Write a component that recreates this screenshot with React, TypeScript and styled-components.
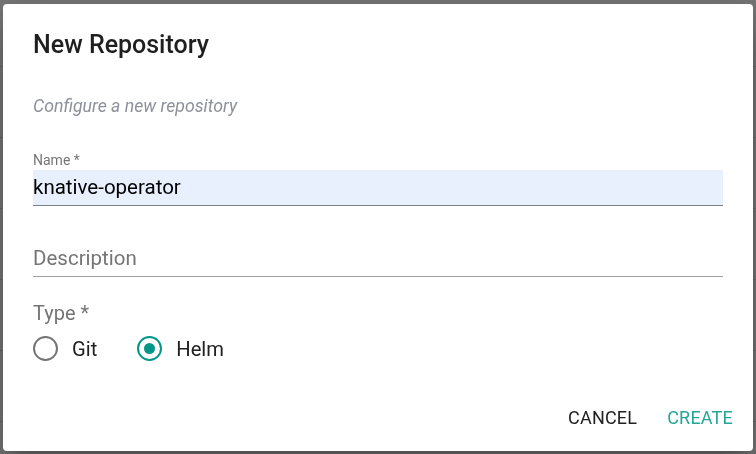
import React, { useState } from "react";
import styled, { createGlobalStyle } from "styled-components";

const GlobalStyle = createGlobalStyle`
  html, body {
    margin: 0;
    padding: 0;
    background: #ffffff;
    font-family: Roboto, "Liberation Sans", Arial, sans-serif;
  }
  * {
    box-sizing: border-box;
  }
`;

// page behind the dialog, only visible through the backdrop
const Page = styled.div`
  display: flex;
  flex-direction: column;
  width: 756px;
  height: 454px;
  overflow: hidden;
`;

const PageHeader = styled.div`
  height: 67px;
  flex-shrink: 0;
  border-bottom: 1px solid #e0e0e0;
`;

const PageRow = styled.div`
  height: 71px;
  flex-shrink: 0;
  border-bottom: 1px solid #e0e0e0;
`;

const Backdrop = styled.div`
  position: fixed;
  inset: 0;
  display: flex;
  align-items: center;
  justify-content: center;
  background-color: rgba(0, 0, 0, 0.54);
`;

const Dialog = styled.div`
  display: flex;
  flex-direction: column;
  width: 750px;
  height: 447px;
  padding: 25px 30px 15px 30px;
  background-color: #ffffff;
  border-radius: 4px;
  box-shadow: 0 11px 15px -7px rgba(0, 0, 0, 0.2),
    0 24px 38px 3px rgba(0, 0, 0, 0.14), 0 9px 46px 8px rgba(0, 0, 0, 0.12);
`;

const Title = styled.h2`
  margin: 0;
  font-size: 25px;
  line-height: 32px;
  font-weight: 500;
  color: #1f1f1f;
`;

const Subtitle = styled.p`
  margin: 33px 0 0 0;
  font-size: 17.7px;
  line-height: 24px;
  font-style: italic;
  color: #8d9199;
`;

const Field = styled.div<{ $top: number }>`
  display: flex;
  flex-direction: column;
  margin-top: ${(p) => p.$top}px;
`;

const SmallLabel = styled.label`
  height: 16px;
  margin-bottom: 2px;
  font-size: 14px;
  line-height: 16px;
  color: #757575;
`;

const TextInput = styled.input<{ $filled?: boolean }>`
  width: 100%;
  height: 36px;
  margin: 0;
  padding: 0;
  border: none;
  border-bottom: 1px solid ${(p) => (p.$filled ? "#7b7f86" : "#9e9e9e")};
  border-radius: 0;
  outline: none;
  background-color: ${(p) => (p.$filled ? "#e8f0fe" : "transparent")};
  font-family: Roboto, "Liberation Sans", Arial, sans-serif;
  font-size: 20.5px;
  color: #000000;

  &::placeholder {
    color: #757575;
    opacity: 1;
  }
`;

const GroupLabel = styled.div`
  margin-top: 24px;
  font-size: 20px;
  line-height: 24px;
  color: #757575;
`;

const RadioRow = styled.div`
  display: flex;
  align-items: center;
  gap: 40px;
  margin-top: 8px;
  height: 32px;
`;

const RadioOption = styled.label`
  display: flex;
  align-items: center;
  gap: 14px;
  font-size: 20.2px;
  line-height: 32px;
  color: #212121;
  cursor: pointer;
`;

const RadioCircle = styled.span<{ $checked: boolean }>`
  display: flex;
  align-items: center;
  justify-content: center;
  width: 25px;
  height: 25px;
  border-radius: 50%;
  border: 2.5px solid ${(p) => (p.$checked ? "#009688" : "#757575")};

  &::after {
    content: "";
    width: 11px;
    height: 11px;
    border-radius: 50%;
    background-color: #009688;
    display: ${(p) => (p.$checked ? "block" : "none")};
  }
`;

const Actions = styled.div`
  display: flex;
  justify-content: flex-end;
  gap: 14px;
  margin-top: auto;
  margin-right: -18px;
`;

const ActionButton = styled.button<{ $primary?: boolean }>`
  height: 36px;
  padding: 0 8px;
  border: none;
  background: none;
  font-family: Roboto, "Liberation Sans", Arial, sans-serif;
  font-size: 18px;
  letter-spacing: 0.2px;
  text-transform: uppercase;
  color: ${(p) => (p.$primary ? "#26a69a" : "#212121")};
  cursor: pointer;
`;

const App = () => {
  const [name, setName] = useState("knative-operator");
  const [description, setDescription] = useState("");
  const [type, setType] = useState("helm");

  const types = [
    { value: "git", label: "Git" },
    { value: "helm", label: "Helm" },
  ];

  return (
    <>
      <GlobalStyle />
      <Page>
        <PageHeader />
        {[0, 1, 2, 3, 4, 5].map((i) => (
          <PageRow key={i} />
        ))}
      </Page>
      <Backdrop>
        <Dialog>
          <Title>New Repository</Title>
          <Subtitle>Configure a new repository</Subtitle>

          <Field $top={34}>
            <SmallLabel>Name *</SmallLabel>
            <TextInput
              $filled
              value={name}
              onChange={(e) => setName(e.target.value)}
            />
          </Field>

          <Field $top={17}>
            <SmallLabel />
            <TextInput
              placeholder="Description"
              value={description}
              onChange={(e) => setDescription(e.target.value)}
            />
          </Field>

          <GroupLabel>Type *</GroupLabel>
          <RadioRow>
            {types.map((t) => (
              <RadioOption key={t.value} onClick={() => setType(t.value)}>
                <RadioCircle $checked={type === t.value} />
                {t.label}
              </RadioOption>
            ))}
          </RadioRow>

          <Actions>
            <ActionButton>Cancel</ActionButton>
            <ActionButton $primary>Create</ActionButton>
          </Actions>
        </Dialog>
      </Backdrop>
    </>
  );
};

export default App;
